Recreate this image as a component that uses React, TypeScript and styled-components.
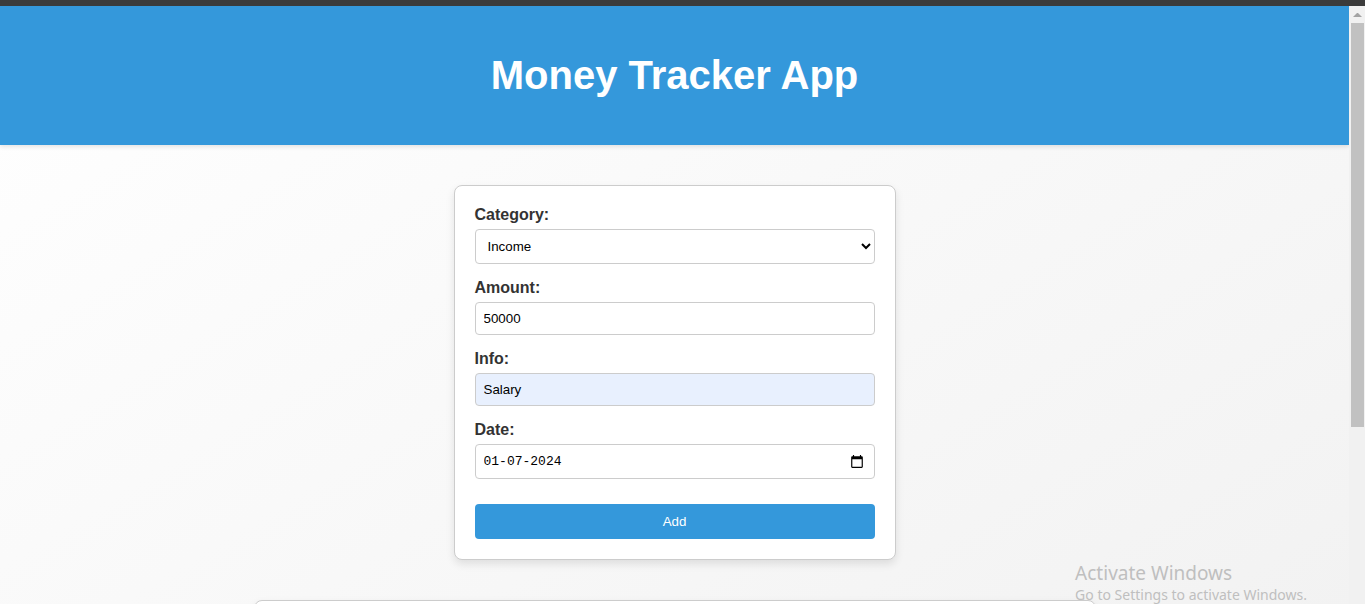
import React, { useState } from "react";
import styled, { createGlobalStyle } from "styled-components";

const GlobalStyle = createGlobalStyle`
  * { box-sizing: border-box; }
  body {
    margin: 0;
    font-family: Arial, "Liberation Sans", sans-serif;
    color: #333;
  }
`;

const Window = styled.div`
  position: relative;
  display: flex;
  flex-direction: column;
  height: 100vh;
  overflow: hidden;
`;

const TitleStrip = styled.div`
  flex: none;
  height: 6px;
  background: #3b3b3b;
`;

const Viewport = styled.div`
  flex: 1;
  display: flex;
  min-height: 0;
`;

const Page = styled.div`
  flex: 1;
  min-width: 0;
  overflow: hidden;
  background: linear-gradient(to bottom right, #ffffff, #f0f0f0) 0 0 / 100% 140% no-repeat;
`;

const Header = styled.header`
  padding: 46px 20px 47px;
  background: #3498db;
  box-shadow: 0 2px 4px rgba(0, 0, 0, 0.1);
  text-align: center;
`;

const Title = styled.h1`
  margin: 0;
  color: #fff;
  font-size: 40px;
  line-height: 46px;
`;

const Main = styled.main`
  display: flex;
  flex-direction: column;
  align-items: center;
  gap: 40px;
  padding: 40px 20px;
`;

const Card = styled.section<{ $width: number }>`
  width: 100%;
  max-width: ${(p) => p.$width}px;
  padding: 20px;
  border: 1px solid #ccc;
  border-radius: 8px;
  background: #fff;
  box-shadow: 0 4px 8px rgba(0, 0, 0, 0.1);
`;

const Form = styled.form`
  display: flex;
  flex-direction: column;
  gap: 15px;
`;

const Field = styled.div`
  display: flex;
  flex-direction: column;
  gap: 5px;
`;

const Label = styled.label`
  font-size: 16px;
  font-weight: bold;
  line-height: 18px;
`;

const controlFont = `font-family: Arial, "Liberation Sans", sans-serif;`;

const Select = styled.select`
  ${controlFont}
  height: 35px;
  padding: 8px;
  border: 1px solid #ccc;
  border-radius: 4px;
  background: #fff;
  color: #000;
`;

const Input = styled.input<{ $filled?: boolean }>`
  ${controlFont}
  height: 33px;
  padding: 8px;
  border: 1px solid #ccc;
  border-radius: 4px;
  background: ${(p) => (p.$filled ? "#e8f0fe" : "#fff")};
  color: #000;
`;

const DateBox = styled.div`
  display: flex;
  align-items: center;
  height: 35px;
  padding: 0 10px 0 8px;
  border: 1px solid #ccc;
  border-radius: 4px;
  background: #fff;
`;

const DateInput = styled.input`
  flex: 1;
  min-width: 0;
  padding: 0;
  border: 0;
  outline: 0;
  background: none;
  color: #000;
  font-family: "Liberation Mono", monospace;
  font-size: 13px;
`;

const PickerButton = styled.button`
  display: flex;
  padding: 0;
  border: 0;
  background: none;
  color: #000;
`;

const AddButton = styled.button`
  ${controlFont}
  height: 35px;
  margin-top: 10px;
  border: 0;
  border-radius: 4px;
  background: #3498db;
  color: #fff;
  cursor: pointer;
`;

const ScrollTrack = styled.div`
  flex: none;
  display: flex;
  flex-direction: column;
  width: 16px;
  padding: 0 1px 0 2px;
  background: #f1f1f1;
`;

const ScrollArrow = styled.svg`
  flex: none;
  width: 13px;
  height: 17px;
`;

const ScrollThumb = styled.div`
  flex: none;
  height: 67.5%;
  background: #c1c1c1;
`;

const Watermark = styled.aside`
  position: absolute;
  right: 58px;
  bottom: 0;
  color: #bfbfbf;
  font-family: "Noto Sans", "Open Sans", sans-serif;
  pointer-events: none;
  white-space: nowrap;
`;

const WatermarkTitle = styled.div`
  font-size: 19px;
  line-height: 26px;
`;

const WatermarkText = styled.div`
  font-size: 14px;
  line-height: 18px;
`;

export default function App() {
  const [category, setCategory] = useState("income");
  const [amount, setAmount] = useState("50000");
  const [info, setInfo] = useState("Salary");
  const [date, setDate] = useState("01-07-2024");

  return (
    <Window>
      <GlobalStyle />
      <TitleStrip />
      <Viewport>
        <Page>
          <Header>
            <Title>Money Tracker App</Title>
          </Header>
          <Main>
            <Card $width={442}>
              <Form onSubmit={(e) => e.preventDefault()}>
                <Field>
                  <Label htmlFor="category">Category:</Label>
                  <Select id="category" value={category} onChange={(e) => setCategory(e.target.value)}>
                    <option value="income">Income</option>
                    <option value="expense">Expense</option>
                  </Select>
                </Field>
                <Field>
                  <Label htmlFor="amount">Amount:</Label>
                  <Input id="amount" inputMode="numeric" value={amount} onChange={(e) => setAmount(e.target.value)} />
                </Field>
                <Field>
                  <Label htmlFor="info">Info:</Label>
                  <Input id="info" $filled value={info} onChange={(e) => setInfo(e.target.value)} />
                </Field>
                <Field>
                  <Label htmlFor="date">Date:</Label>
                  <DateBox>
                    <DateInput id="date" value={date} onChange={(e) => setDate(e.target.value)} />
                    <PickerButton type="button" aria-label="Pick a date">
                      <svg width="14" height="15" viewBox="0 0 24 24" fill="currentColor" aria-hidden="true">
                        <path d="M20 3h-1V1h-2v2H7V1H5v2H4c-1.1 0-2 .9-2 2v16c0 1.1.9 2 2 2h16c1.1 0 2-.9 2-2V5c0-1.1-.9-2-2-2zm0 18H4V8h16v13z" />
                      </svg>
                    </PickerButton>
                  </DateBox>
                </Field>
                <AddButton type="submit">Add</AddButton>
              </Form>
            </Card>
            <Card $width={842} />
          </Main>
        </Page>
        <ScrollTrack aria-hidden="true">
          <ScrollArrow viewBox="0 0 13 17">
            <path d="M2 11L6 7h1L11 11z" fill="#a3a3a3" />
          </ScrollArrow>
          <ScrollThumb />
        </ScrollTrack>
      </Viewport>
      <Watermark>
        <WatermarkTitle>Activate Windows</WatermarkTitle>
        <WatermarkText>Go to Settings to activate Windows.</WatermarkText>
      </Watermark>
    </Window>
  );
}
